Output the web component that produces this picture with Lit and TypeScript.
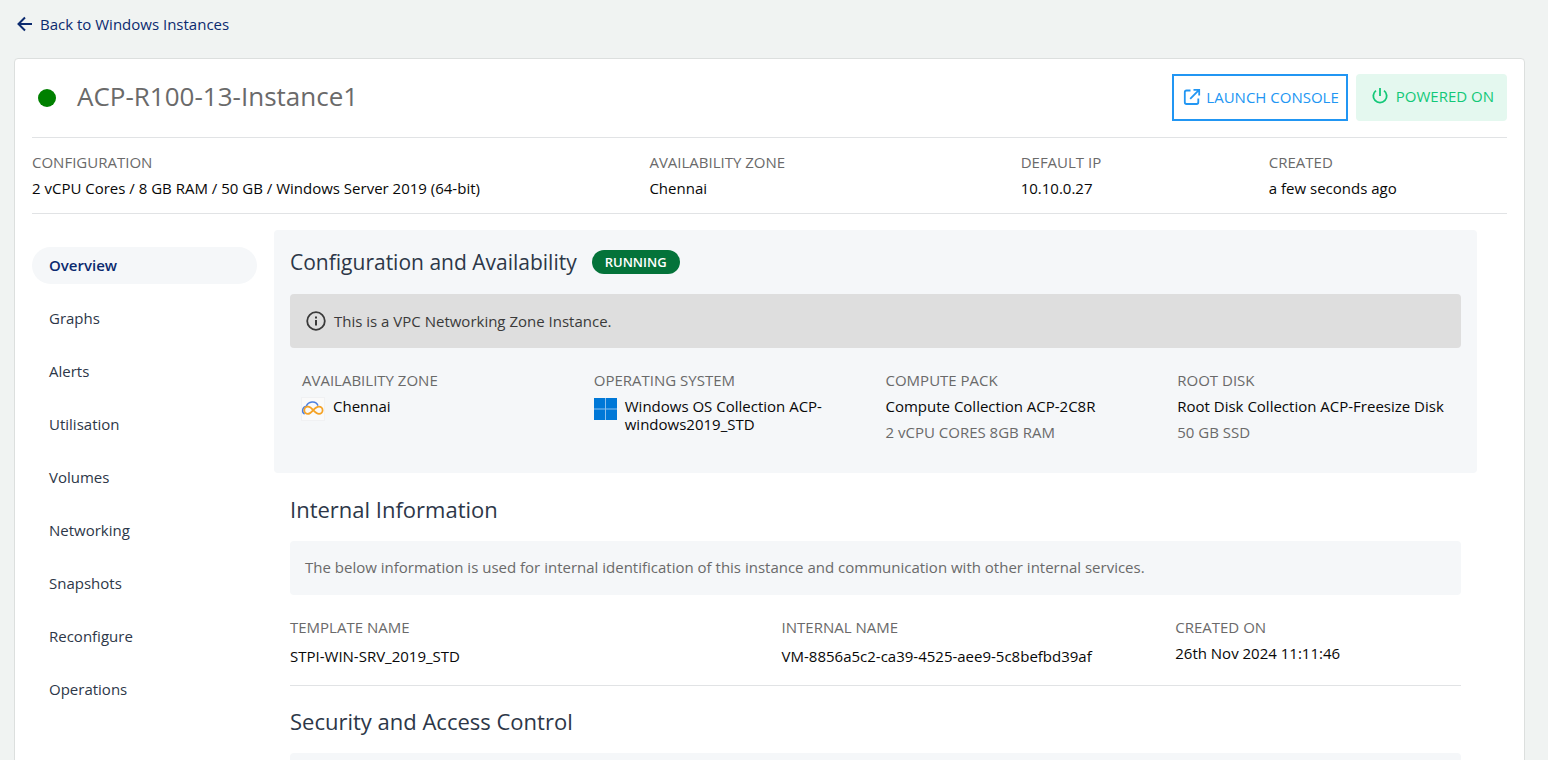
import { LitElement, html, css, nothing, TemplateResult } from "lit";
import { customElement, state } from "lit/decorators.js";
import { classMap } from "lit/directives/class-map.js";

const arrowLeft = html`<svg viewBox="0 0 16 16" width="16" height="16" aria-hidden="true">
  <path d="M15 8H2M8 1.5 1.5 8 8 14.5" fill="none" stroke="currentColor" stroke-width="2" />
</svg>`;

const launchIcon = html`<svg viewBox="0 0 18 18" width="18" height="18" aria-hidden="true">
  <path d="M7.5 2.5H3.5A1.7 1.7 0 0 0 1.8 4.2V14.3A1.7 1.7 0 0 0 3.5 16H13.6A1.7 1.7 0 0 0 15.3 14.3V10.5M10.5 1.8H16.2V7.5M15.8 2.2 7.2 10.8" fill="none" stroke="currentColor" stroke-width="1.8" />
</svg>`;

const powerIcon = html`<svg viewBox="0 0 18 18" width="18" height="18" aria-hidden="true">
  <path d="M9 1V9M5 3.6A6.7 6.7 0 1 0 13 3.6" fill="none" stroke="currentColor" stroke-width="1.8" />
</svg>`;

const infoIcon = html`<svg viewBox="0 0 20 20" width="20" height="20" aria-hidden="true">
  <circle cx="10" cy="10" r="8.8" fill="none" stroke="currentColor" stroke-width="1.8" />
  <path d="M10 9V14.5M10 5.5V7.4" stroke="currentColor" stroke-width="2" />
</svg>`;

const cloudIcon = html`<svg class="logo" viewBox="0 0 24 24" width="24" height="24" aria-hidden="true">
  <rect x="0.5" y="0.5" width="23" height="23" fill="#fafafa" stroke="#f0f1f3" />
  <path d="M3.6 17C0.4 15.5 1.2 9.6 5.4 9.2 7 4.6 14.6 3 17 8.6" fill="none" stroke="#4b7fe0" stroke-width="1.5" />
  <path d="M12.2 13.2C10 10.4 8.6 9.7 6.9 9.7A3.5 3.5 0 0 0 6.9 16.9C11 16.9 13 9.7 18 9.7A3.6 3.6 0 0 1 18 16.9C15.8 16.9 14.4 15.6 12.2 13.2Z" fill="none" stroke="#f5a326" stroke-width="1.8" />
</svg>`;

const windowsIcon = html`<svg class="logo" viewBox="0 0 24 24" width="24" height="24" aria-hidden="true">
  <rect x="1" y="1" width="23" height="22" fill="#8cc0ee" />
  <path d="M1 1H12V11.5H1ZM13 1H24V11.5H13ZM1 12.5H12V23H1ZM13 12.5H24V23H13Z" fill="#0078d7" />
</svg>`;

interface Field {
  label: string;
  value: string;
  note?: string;
  icon?: TemplateResult;
  loose?: boolean;
}

const summary: Field[] = [
  { label: "CONFIGURATION", value: "2 vCPU Cores / 8 GB RAM / 50 GB / Windows Server 2019 (64-bit)" },
  { label: "AVAILABILITY ZONE", value: "Chennai" },
  { label: "DEFAULT IP", value: "10.10.0.27" },
  { label: "CREATED", value: "a few seconds ago" },
];

const configuration: Field[] = [
  { label: "AVAILABILITY ZONE", value: "Chennai", icon: cloudIcon },
  { label: "OPERATING SYSTEM", value: "Windows OS Collection ACP-windows2019_STD", icon: windowsIcon },
  { label: "COMPUTE PACK", value: "Compute Collection ACP-2C8R", note: "2 vCPU CORES 8GB RAM" },
  { label: "ROOT DISK", value: "Root Disk Collection ACP-Freesize Disk", note: "50 GB SSD" },
];

const internal: Field[] = [
  { label: "TEMPLATE NAME", value: "STPI-WIN-SRV_2019_STD", loose: true },
  { label: "INTERNAL NAME", value: "VM-8856a5c2-ca39-4525-aee9-5c8befbd39af", loose: true },
  { label: "CREATED ON", value: "26th Nov 2024 11:11:46" },
];

const sections = ["Overview", "Graphs", "Alerts", "Utilisation", "Volumes", "Networking", "Snapshots", "Reconfigure", "Operations"];

@customElement("app-root")
export class AppRoot extends LitElement {
  @state() private active = "Overview";

  static styles = css`
    :host {
      display: block;
      box-sizing: border-box;
      height: 100vh;
      overflow: hidden auto;
      scrollbar-width: none;
      padding: 14px 23px 0 14px;
      background: #f0f3f2;
      color: #080808;
      font-family: "Open Sans", "Noto Sans", sans-serif;
      font-size: 15px;
      line-height: 20px;
    }
    * { box-sizing: border-box; }
    h1, h2, p, dl, dt, dd, ul { margin: 0; padding: 0; font-weight: 400; }
    svg { display: block; flex: none; }
    a { text-decoration: none; color: inherit; }
    .back {
      display: inline-flex;
      align-items: center;
      gap: 7px;
      padding-left: 3px;
      color: #0b2a6f;
    }
    .card {
      margin-top: 22px;
      padding: 15px 17px 40px;
      background: #fff;
      border: 1px solid #dcdfde;
      border-radius: 4px;
    }
    .head {
      display: flex;
      align-items: center;
      gap: 8px;
      padding-bottom: 16px;
      border-bottom: 1px solid #e1e3e5;
    }
    .dot {
      width: 18px;
      height: 18px;
      margin: 0 13px 0 6px;
      border-radius: 50%;
      background: #008000;
    }
    h1 {
      flex: 1;
      padding-bottom: 4px;
      font-size: 26px;
      line-height: 36px;
      color: #6a6a6a;
    }
    button {
      display: flex;
      align-items: center;
      height: 47px;
      font: inherit;
      cursor: pointer;
    }
    .launch {
      gap: 5px;
      padding: 0 7px 2px 9px;
      border: 2px solid #2196f3;
      background: #fff;
      color: #2196f3;
    }
    .power {
      gap: 7px;
      padding: 0 13px 3px 15px;
      border: 0;
      border-radius: 4px;
      background: #e4f8ef;
      color: #12c878;
    }
    dt { color: #6a6a6a; }
    .ruled { border-bottom: 1px solid #e1e3e5; }
    .fields {
      display: grid;
      column-gap: 2px;
      margin-right: -8px;
    }
    .fields dd { margin-top: 6px; }
    .fields dd.loose { margin-top: 9px; }
    .summary {
      grid-template-columns: 5fr 3fr 2fr 2fr;
      padding: 14px 0 15px;
    }
    .internal {
      grid-template-columns: 5fr 4fr 3fr;
      padding: 22px 0 19px;
    }
    .body {
      display: flex;
      gap: 17px;
      padding: 16px 30px 0 0;
    }
    nav { flex: 0 0 225px; padding-top: 17px; }
    nav ul {
      display: flex;
      flex-direction: column;
      gap: 16px;
      list-style: none;
    }
    nav a {
      display: block;
      padding: 8px 17px;
      line-height: 21px;
      border-radius: 20px;
      color: #2d3748;
    }
    nav a.active {
      background: #f5f7f9;
      color: #0b2a6f;
      font-weight: 600;
    }
    main { flex: 1; min-width: 0; }
    section { padding: 16px; }
    .panel {
      padding-bottom: 32px;
      border-radius: 4px;
      background: #f5f7f9;
    }
    .title { display: flex; align-items: center; gap: 15px; }
    h2 {
      font-size: 22px;
      line-height: 32px;
      color: #2d3748;
    }
    .panel h2 { font-size: 21px; }
    .badge {
      padding: 0 13px;
      border-radius: 12px;
      background: #04733a;
      color: #fff;
      font-size: 13px;
      font-weight: 600;
      line-height: 24px;
    }
    .note {
      display: flex;
      align-items: center;
      gap: 8px;
      min-height: 54px;
      margin-top: 16px;
      padding: 0 15px 2px;
      border-radius: 4px;
      background: #f5f7f9;
      color: #6a6a6a;
    }
    .note.info { padding: 0 16px; background: #dedede; color: #3a3a3a; }
    .specs {
      display: grid;
      grid-template-columns: repeat(4, 1fr);
      gap: 8px;
      padding: 22px 0 0 12px;
    }
    .entry { display: flex; gap: 8px; margin-top: 7px; line-height: 18px; }
    .sub { margin-top: 8px; line-height: 18px; color: #6a6a6a; }
    .logo { margin-left: -1px; }
    .section-internal { padding: 20px 16px 0; }
    .section-security { padding-top: 19px; }
  `;

  private field(f: Field) {
    return html`<div>
      <dt>${f.label}</dt>
      <dd class=${classMap({ loose: !!f.loose })}>${f.value}</dd>
    </div>`;
  }

  private spec(f: Field) {
    return html`<div>
      <dt>${f.label}</dt>
      <dd class="entry">${f.icon ?? nothing}<span>${f.value}</span></dd>
      ${f.note ? html`<dd class="sub">${f.note}</dd>` : nothing}
    </div>`;
  }

  render() {
    return html`
      <a class="back" href="#instances">${arrowLeft}Back to Windows Instances</a>
      <div class="card">
        <header class="head">
          <span class="dot"></span>
          <h1>ACP-R100-13-Instance1</h1>
          <button class="launch" type="button">${launchIcon}LAUNCH CONSOLE</button>
          <button class="power" type="button">${powerIcon}POWERED ON</button>
        </header>
        <div class="ruled">
          <dl class="fields summary">${summary.map((f) => this.field(f))}</dl>
        </div>
        <div class="body">
          <nav>
            <ul>
              ${sections.map(
                (s) => html`<li>
                  <a href="#${s.toLowerCase()}" class=${classMap({ active: s === this.active })}
                    @click=${() => (this.active = s)}>${s}</a>
                </li>`
              )}
            </ul>
          </nav>
          <main>
            <section class="panel">
              <div class="title">
                <h2>Configuration and Availability</h2>
                <span class="badge">RUNNING</span>
              </div>
              <p class="note info">${infoIcon}This is a VPC Networking Zone Instance.</p>
              <dl class="specs">${configuration.map((f) => this.spec(f))}</dl>
            </section>
            <section class="section-internal">
              <h2>Internal Information</h2>
              <p class="note">The below information is used for internal identification of this instance and communication with other internal services.</p>
              <div class="ruled">
                <dl class="fields internal">${internal.map((f) => this.field(f))}</dl>
              </div>
            </section>
            <section class="section-security">
              <h2>Security and Access Control</h2>
              <p class="note"></p>
            </section>
          </main>
        </div>
      </div>
    `;
  }
}
